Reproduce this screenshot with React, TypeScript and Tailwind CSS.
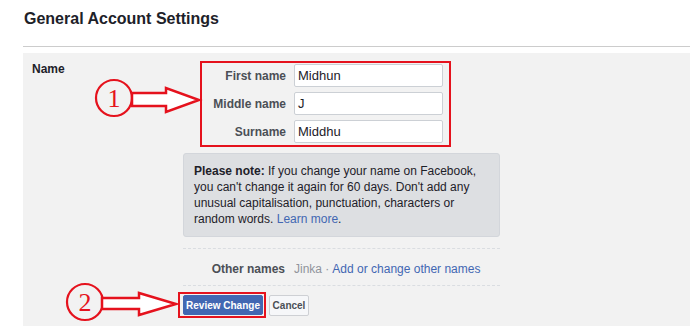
import type { ReactNode } from "react";

const font = { fontFamily: '"Liberation Sans", Arial, Helvetica, sans-serif' };

function NameRow({ label, value }: { label: string; value: string }) {
  return (
    <div className="flex items-center">
      <label className="w-[84px] text-right text-[12px] font-bold text-[#4b4f56] leading-4">
        {label}
      </label>
      <div className="ml-[8px] h-[23px] w-[149px] rounded-[2px] border border-[#ccd0d5] bg-white px-[3px] flex items-center text-[13px] text-[#1d2129]">
        {value}
      </div>
    </div>
  );
}

function Callout({ n, children }: { n: string; children?: ReactNode }) {
  return (
    <>
      <circle cx={0} cy={0} r={18} fill="none" stroke="#e5121d" strokeWidth={2.2} />
      <text
        x={0}
        y={9}
        textAnchor="middle"
        fontSize={26}
        fill="#e5121d"
        fontFamily='"Liberation Serif", "Times New Roman", serif'
      >
        {n}
      </text>
      {children}
    </>
  );
}

export default function App() {
  return (
    <div className="relative h-[326px] w-[690px] overflow-hidden bg-white" style={font}>
      <div className="ml-[23px]">
        <h2 className="pl-[1px] pt-[9px] h-[46px] text-[16px] leading-5 font-bold text-[#1d2129]">
          General Account Settings
        </h2>
        <div className="border-t border-[#cccccc]" />
        <div className="mt-[6px] h-[273px] bg-[#f2f2f2] flex pt-[8px]">
          <div className="w-[160px] pl-[9px] text-[12px] font-bold text-[#1d2129] leading-4">Name</div>
          <div className="w-[317px]">
            <div className="ml-[17px] w-[251px] border-2 border-[#e5121d] pt-[1px] pb-[2px] flex flex-col gap-[5px]">
              <NameRow label="First name" value="Midhun" />
              <NameRow label="Middle name" value="J" />
              <NameRow label="Surname" value="Middhu" />
            </div>
            <div className="mt-[6px] rounded-[3px] border border-[#d3d6db] bg-[#dddfe2] px-[10px] py-[9px] text-[12px] leading-4 text-[#1d2129]">
              <span className="font-bold">Please note:</span> If you change your name on Facebook, you can't change it
              again for 60 days. Don't add any unusual capitalisation, punctuation, characters or random words.{" "}
              <span className="text-[#4267b2]">Learn more</span>.
            </div>
            <div className="mt-[11px] border-t border-dashed border-[#dadde1]" />
            <div className="flex h-[36px] items-center pt-[4px] text-[12px]">
              <span className="w-[102px] text-right font-bold text-[#4b4f56]">Other names</span>
              <span className="ml-[9px] text-[#90949c]">Jinka ·</span>
              <span className="ml-[3px] text-[#4267b2]">Add or change other names</span>
            </div>
            <div className="border-t border-dashed border-[#dadde1]" />
            <div className="mt-[9px] flex gap-[6px]">
              <button className="relative h-[20px] w-[80px] whitespace-nowrap rounded-[2px] border border-[#4267b2] bg-[#4267b2] text-[10px] font-bold text-white">
                Review Change
                <span className="absolute -left-[6px] -right-[4px] -top-[4px] -bottom-[4px] border-2 border-[#e5121d]" />
              </button>
              <button className="h-[21px] w-[40px] whitespace-nowrap rounded-[2px] border border-[#ced0d4] bg-[#f6f7f9] text-[10px] font-bold text-[#4b4f56]">
                Cancel
              </button>
            </div>
          </div>
        </div>
      </div>

      <svg className="pointer-events-none absolute left-0 top-0" width={690} height={326}>
        <g transform="translate(114 98)">
          <Callout n="1" />
        </g>
        <polygon
          points="132,93 166,93 166,88 199,100 166,112 166,106 132,106"
          fill="white"
          stroke="#e5121d"
          strokeWidth={2.5}
          strokeLinejoin="miter"
        />
        <g transform="translate(85 302)">
          <Callout n="2" />
        </g>
        <polygon
          points="102,298 139,298 139,293 176,304 139,315 139,309 102,309"
          fill="white"
          stroke="#e5121d"
          strokeWidth={2.5}
          strokeLinejoin="miter"
        />
      </svg>
    </div>
  );
}
